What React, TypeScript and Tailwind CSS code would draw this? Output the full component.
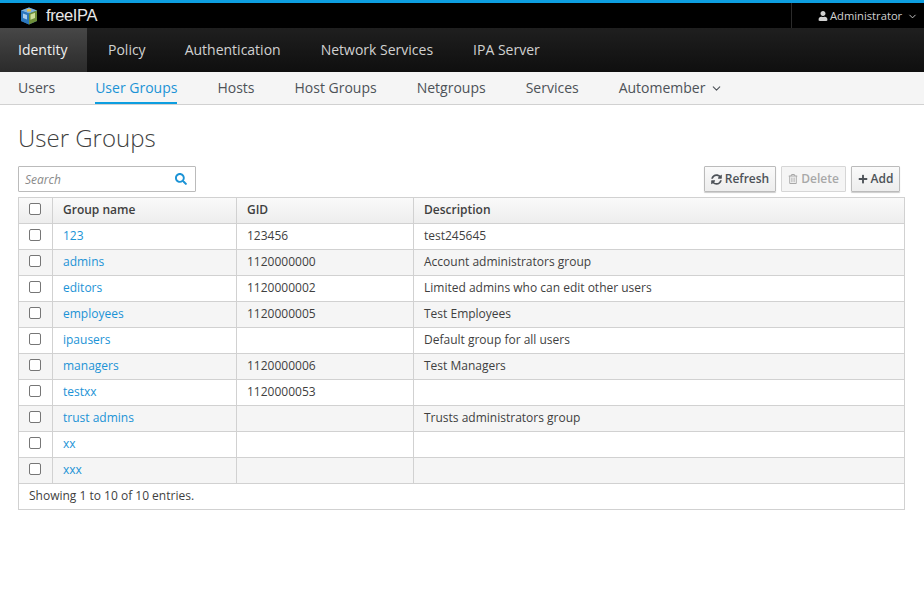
import { FaPlus, FaRegTrashAlt, FaSearch, FaSyncAlt, FaUser } from 'react-icons/fa'
import { LuChevronDown } from 'react-icons/lu'

const primaryNav = ['Policy', 'Authentication', 'Network Services', 'IPA Server']
const secondaryNav = ['Hosts', 'Host Groups', 'Netgroups', 'Services']

const groups = [
  { name: '123', gid: '123456', description: 'test245645' },
  { name: 'admins', gid: '1120000000', description: 'Account administrators group' },
  { name: 'editors', gid: '1120000002', description: 'Limited admins who can edit other users' },
  { name: 'employees', gid: '1120000005', description: 'Test Employees' },
  { name: 'ipausers', gid: '', description: 'Default group for all users' },
  { name: 'managers', gid: '1120000006', description: 'Test Managers' },
  { name: 'testxx', gid: '1120000053', description: '' },
  { name: 'trust admins', gid: '', description: 'Trusts administrators group' },
  { name: 'xx', gid: '', description: '' },
  { name: 'xxx', gid: '', description: '' },
]

function Logo() {
  return (
    <svg width="18" height="18" viewBox="0 0 18 18" className="shrink-0">
      <path d="M9 0.5 L17 3.5 L17 14 L9 17.5 L1 14 L1 3.5 Z" fill="#2c6aa8" />
      <path d="M9 0.5 L17 3.5 L9 6.5 L1 3.5 Z" fill="#7fb2dc" />
      <path d="M9 6.5 L17 3.5 L17 14 L9 17.5 Z" fill="#6f8f3a" />
      <path d="M1 3.5 L9 6.5 L9 17.5 L1 14 Z" fill="#2a76bd" />
      <path d="M10.5 7.5 L15 5.8 L15 11 L10.5 12.8 Z" fill="#cfe09a" />
      <path d="M3 6.5 L7 8 L7 12.5 L3 11 Z" fill="#a8cdec" />
      <path d="M7 2 L11 2 L11 4.5 L7 4.5 Z" fill="#e6c04a" />
    </svg>
  )
}

function Checkbox() {
  return <span className="mb-[3px] mr-[2px] block h-[12px] w-[12px] rounded-[2px] border border-[#767676] bg-white" />
}

export default function App() {
  return (
    <div className="min-h-[603px] bg-white font-['Open_Sans',sans-serif] text-[13px] text-[#3f3f3f]">
      <header className="flex h-[28px] border-t-[3px] border-[#0d9ee0] bg-black">
        <div className="flex items-center gap-[8px] pl-[20px]">
          <Logo />
          <span className="font-['Liberation_Sans',sans-serif] text-[16.5px] tracking-[-0.4px] text-[#e8e8e8]">freeIPA</span>
        </div>
        <div className="ml-auto flex w-[133px] items-center border-l border-[#2b2b2b] pl-[26px] pt-[1px] text-[11.2px] text-[#d1d1d1]">
          <FaUser className="mr-[2px] text-[10px]" />
          <span>Administrator</span>
          <LuChevronDown className="ml-[5px] text-[11px]" />
        </div>
      </header>

      <nav className="flex h-[44px] bg-gradient-to-b from-[#1f1f1f] to-[#0f0f0f] pb-[2px] text-[14px] text-[#d1d1d1]">
        <div className="-mb-[2px] flex w-[87px] items-center bg-gradient-to-b from-[#474747] to-[#2b2b2b] pb-[2px] pl-[18px] text-[#f0f0f0]">Identity</div>
        {primaryNav.map((item, i) => (
          <div key={item} className={`flex items-center ${i === 0 ? 'pl-[21px] pr-[19px]' : 'px-[20px]'}`}>{item}</div>
        ))}
      </nav>

      <nav className="flex h-[33px] border-b border-[#d1d1d1] bg-[#f5f5f5] pl-[18px] text-[14px] text-[#4d5258]">
        <div className="flex items-center pb-[2px]">Users</div>
        <div className="ml-[40px] flex items-center border-b-2 border-[#0d9ee0] text-[#1b93d6]">User Groups</div>
        {secondaryNav.map(item => (
          <div key={item} className="ml-[40px] flex items-center pb-[2px]">{item}</div>
        ))}
        <div className="ml-[40px] flex items-center pb-[2px]">
          Automember
          <LuChevronDown className="ml-[5px] mt-[2px] text-[13px]" />
        </div>
      </nav>

      <main className="pl-[18px] pr-[19px]">
        <h1 className="mt-[17px] text-[24px] leading-[32px] font-light text-[#3f3f3f]">User Groups</h1>

        <div className="mt-[12px] flex items-center justify-between pr-[5px]">
          <div className="flex h-[26px] w-[178px] items-center rounded-[1px] border border-[#bbb] pl-[6px] pr-[8px]">
            <span className="pt-[1px] text-[12px] italic text-[#8a8a8a]">Search</span>
            <FaSearch className="ml-auto text-[12px] text-[#1b93d6]" />
          </div>
          <div className="flex gap-[5px]">
            <button className="flex h-[26px] w-[72px] items-center justify-center gap-[3px] rounded-[1px] border border-[#bbb] bg-gradient-to-b from-[#fafafa] to-[#ededed] text-[12px] font-semibold text-[#4d5258] shadow-[0_1px_1px_rgba(0,0,0,0.2)]">
              <FaSyncAlt className="text-[11px]" />
              Refresh
            </button>
            <button className="flex h-[26px] w-[65px] items-center justify-center gap-[3px] rounded-[1px] border border-[#d6d6d6] bg-[#f5f5f5] text-[12px] font-semibold text-[#a8a8a8]">
              <FaRegTrashAlt className="text-[10px]" />
              Delete
            </button>
            <button className="flex h-[26px] w-[49px] items-center justify-center gap-[3px] rounded-[1px] border border-[#bbb] bg-gradient-to-b from-[#fafafa] to-[#ededed] text-[12px] font-semibold text-[#4d5258] shadow-[0_1px_1px_rgba(0,0,0,0.2)]">
              <FaPlus className="text-[10px]" />
              Add
            </button>
          </div>
        </div>

        <div className="mt-[5px] border border-[#d1d1d1] text-[12px]">
          <div className="grid h-[26px] grid-cols-[33px_184px_177px_1fr] border-b border-[#d1d1d1] bg-gradient-to-b from-[#fafafa] to-[#ededed] font-semibold text-[#3f3f3f]">
            <div className="flex items-center justify-center">
              <Checkbox />
            </div>
            <div className="flex items-center border-l border-[#d1d1d1] pb-[2px] pl-[10px]">Group name</div>
            <div className="flex items-center border-l border-[#d1d1d1] pb-[2px] pl-[10px]">GID</div>
            <div className="flex items-center border-l border-[#d1d1d1] pb-[2px] pl-[10px]">Description</div>
          </div>
          {groups.map((g, i) => (
            <div
              key={g.name}
              className={`grid h-[26px] grid-cols-[33px_184px_177px_1fr] border-b border-[#d1d1d1] ${i % 2 ? 'bg-[#f5f5f5]' : 'bg-white'}`}
            >
              <div className="flex items-center justify-center">
                <Checkbox />
              </div>
              <div className="flex items-center border-l border-[#d1d1d1] pb-[2px] pl-[10px] text-[#1b93d6]">{g.name}</div>
              <div className="flex items-center border-l border-[#d1d1d1] pb-[2px] pl-[10px]">{g.gid}</div>
              <div className="flex items-center border-l border-[#d1d1d1] pb-[2px] pl-[10px]">{g.description}</div>
            </div>
          ))}
          <div className="flex h-[25px] items-center pb-[2px] pl-[10px]">Showing 1 to 10 of 10 entries.</div>
        </div>
      </main>
    </div>
  )
}
